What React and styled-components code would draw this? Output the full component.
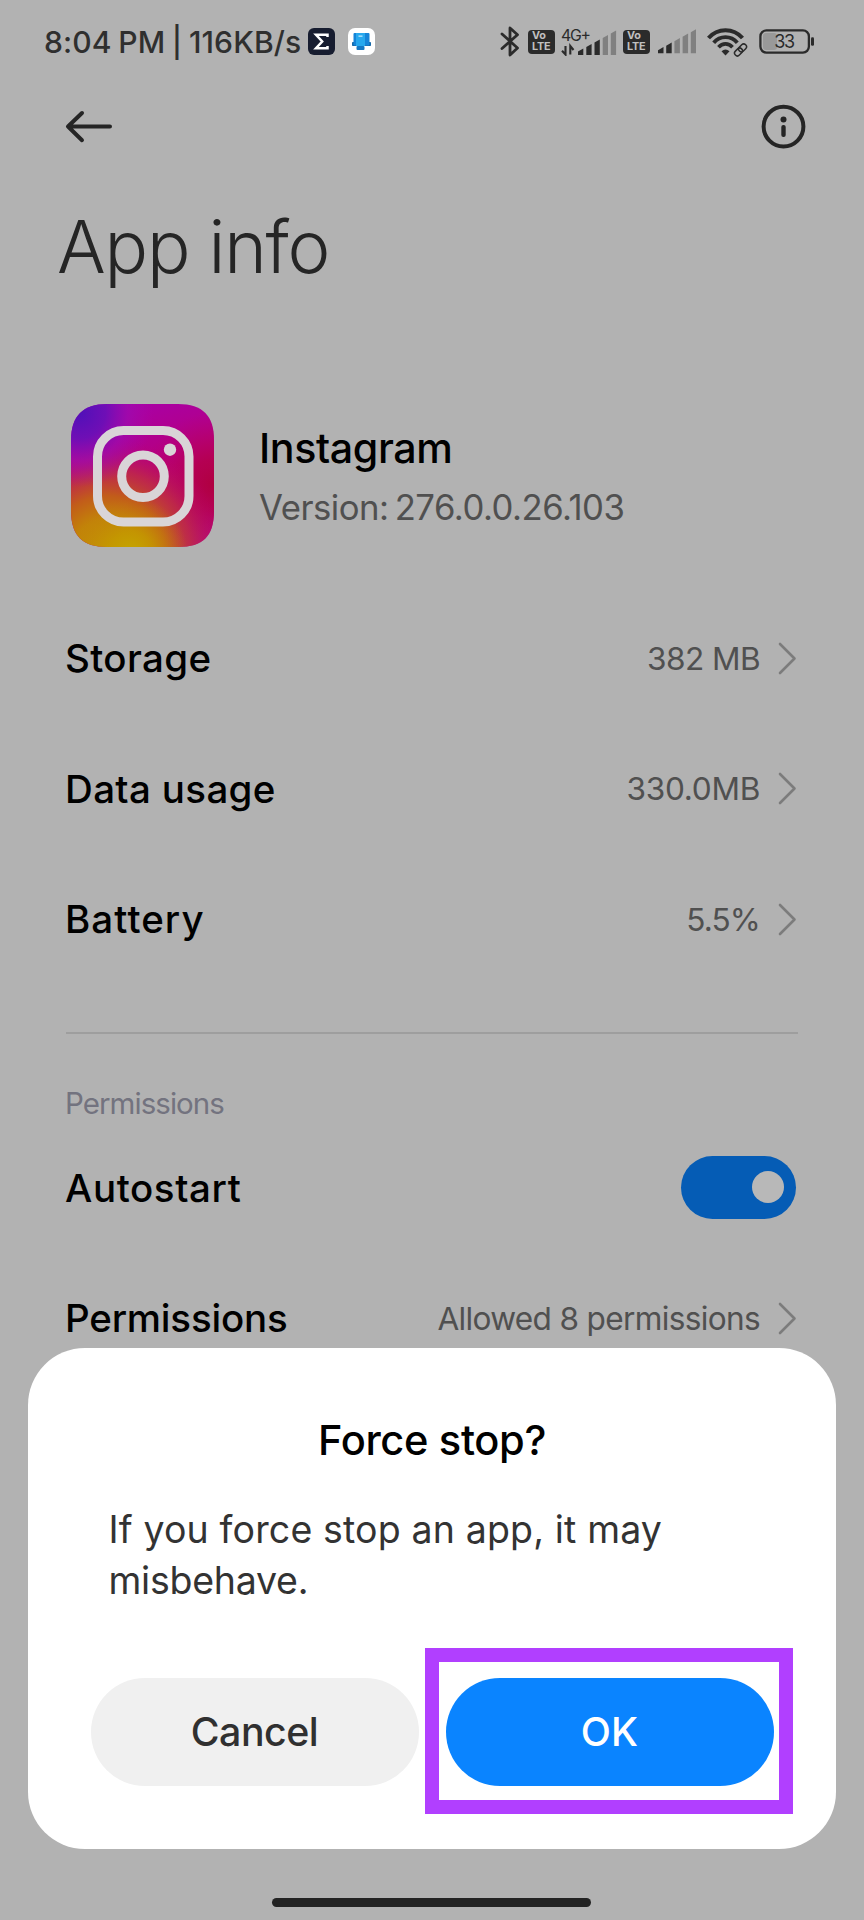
import React from "react";
import styled, { createGlobalStyle } from "styled-components";

const GlobalStyle = createGlobalStyle`
  * { box-sizing: border-box; }
  body { margin: 0; background: #b2b2b2; }
`;

const ink = "#252525";

const Screen = styled.div`
  position: relative;
  width: 864px;
  height: 1920px;
  overflow: hidden;
  background: #b2b2b2;
  color: #000;
  font-family: Inter, "Noto Sans", sans-serif;
  svg { display: block; flex: none; }
`;

const StatusBar = styled.header`
  display: flex;
  align-items: center;
  justify-content: space-between;
  height: 83px;
  padding: 0 49px 0 44px;
`;

const StatusGroup = styled.div`
  display: flex;
  align-items: center;
`;

const Clock = styled.span`
  width: 264px;
  font-size: 30.1px;
  line-height: 40px;
  font-weight: 450;
  letter-spacing: 0.12px;
  word-spacing: -1.6px;
  white-space: pre;
  color: #2f2f2f;
`;

const NotificationIcon = styled.svg`
  margin-right: ${(p) => p.$gap || 0}px;
`;

const StatusIcon = styled.svg`
  margin-left: ${(p) => p.$gap || 0}px;
`;

const VolteBadge = styled.div`
  display: flex;
  flex-direction: column;
  justify-content: center;
  width: 27px;
  height: 24px;
  margin-left: ${(p) => p.$gap}px;
  padding-left: 4px;
  border-radius: 4px;
  background: #2b2b2b;
  color: #c0c0c0;
  font-size: 10.8px;
  line-height: 10.8px;
  font-weight: 700;
  letter-spacing: -0.2px;
`;

const Toolbar = styled.nav`
  display: flex;
  align-items: center;
  justify-content: space-between;
  height: 87px;
  padding: 0 57.5px 0 65px;
`;

const PageTitle = styled.h1`
  margin: 0;
  padding-left: 57px;
  height: 153px;
  line-height: 154px;
  font-size: 72.4px;
  font-weight: 300;
  letter-spacing: -1.2px;
  color: ${ink};
`;

const AppHeader = styled.section`
  display: flex;
  align-items: center;
  gap: 45px;
  height: 143px;
  margin: 80.5px 0 46.5px 71px;
`;

const AppText = styled.div`
  padding-top: 5px;
`;

const AppName = styled.div`
  line-height: 58.5px;
  font-size: 41.2px;
  font-weight: 500;
  letter-spacing: -0.4px;
`;

const AppVersion = styled.div`
  line-height: 58.5px;
  font-size: 34.7px;
  letter-spacing: -0.5px;
  word-spacing: -3px;
  color: #505050;
`;

const Row = styled.div`
  display: flex;
  align-items: center;
  height: 130.5px;
  padding: 0 67px 0 65px;
`;

const RowLabel = styled.span`
  flex: 1;
  font-size: 38.5px;
  font-weight: 500;
  letter-spacing: ${(p) => p.$track}px;
  white-space: nowrap;
`;

const RowValue = styled.span`
  margin-right: 18px;
  font-size: 31.6px;
  letter-spacing: ${(p) => p.$track}px;
  white-space: nowrap;
  color: #505050;
`;

const Divider = styled.hr`
  height: 1.5px;
  margin: 47.5px 66px 0;
  border: 0;
  background: #9e9e9e;
`;

const SectionLabel = styled.h2`
  margin: 0;
  padding: 49px 0 0 65px;
  height: 89px;
  line-height: 40px;
  font-size: 29.5px;
  font-weight: 400;
  letter-spacing: -0.95px;
  color: #73737f;
`;

const Switch = styled.div`
  display: flex;
  align-items: center;
  justify-content: flex-end;
  width: 115px;
  height: 63px;
  margin: 0 1px 1px 0;
  padding-right: 12.5px;
  border-radius: 32px;
  background: #055cb5;
`;

const Knob = styled.div`
  width: 32px;
  height: 32px;
  border-radius: 50%;
  background: #b8b8b8;
`;

const Dialog = styled.section`
  position: absolute;
  left: 28px;
  top: 1348px;
  width: 808px;
  height: 501px;
  padding: 62px 62.5px 0;
  border-radius: 57px;
  background: #fff;
`;

const DialogTitle = styled.h2`
  margin: 0;
  line-height: 60px;
  text-align: center;
  font-size: 41.6px;
  font-weight: 500;
  letter-spacing: -0.35px;
`;

const DialogBody = styled.p`
  margin: 33.5px 0 0;
  padding-left: 18px;
  line-height: 51.5px;
  font-size: 37.5px;
  letter-spacing: 0.15px;
  color: #333;
  span { letter-spacing: -0.25px; }
`;

const Actions = styled.div`
  display: flex;
  gap: 27px;
  margin-top: 71px;
`;

const ActionButton = styled.button`
  flex: 1;
  height: 108px;
  padding: 0;
  border: 0;
  border-radius: 54px;
  background: ${(p) => (p.$primary ? "#0a84ff" : "#f0f0f0")};
  color: ${(p) => (p.$primary ? "#fff" : "#303030")};
  font-family: inherit;
  font-size: 39.3px;
  font-weight: 500;
  letter-spacing: ${(p) => (p.$primary ? 0.2 : -0.5)}px;
`;

const Highlight = styled.div`
  position: absolute;
  left: 397px;
  top: 300px;
  width: 368px;
  height: 166px;
  border: 14px solid #b13fff;
`;

const HomeIndicator = styled.div`
  position: absolute;
  left: 272px;
  bottom: 13px;
  width: 319px;
  height: 9px;
  border-radius: 4.5px;
  background: #232323;
`;

function Bars({ dark, gap }) {
  const tops = [18, 13.5, 9, 4.5, 0];
  return (
    <StatusIcon $gap={gap} width="38.5" height="25" viewBox="0 0 38.5 25">
      {tops.map((t, i) => (
        <path
          key={t}
          d={`M${i * 8.2} ${t + 3.2} L${i * 8.2 + 5.5} ${t} V24.3 H${i * 8.2} Z`}
          fill={i < dark ? "#2b2b2b" : "#808080"}
        />
      ))}
    </StatusIcon>
  );
}

function Bluetooth() {
  return (
    <StatusIcon width="20" height="31" viewBox="0 0 20 31" fill="none" stroke="#2b2b2b" strokeWidth="2.8" strokeLinejoin="round" strokeLinecap="round">
      <path d="M2 8 L17.5 22 L10 29 V2 L17.5 8.8 L2 22.5" />
    </StatusIcon>
  );
}

function MobileData() {
  return (
    <StatusIcon $gap={6} width="56" height="29" viewBox="0 0 56 29">
      <text x="0" y="13.8" fontSize="15.8" fontFamily="Inter, sans-serif" fontWeight="400" fill="#2b2b2b" textLength="30">4G+</text>
      <path d="M4.5 19 V27.5 L1 23.8 M9.3 27.5 V19 L12.5 23" fill="none" stroke="#2b2b2b" strokeWidth="2.1" />
      {[
        [17, 21.5],
        [25.3, 17],
        [33.5, 12.5],
        [41.7, 8],
        [49.8, 3.5],
      ].map(([x, y], i) => (
        <path key={x} d={`M${x} ${y + 3} L${x + 5.3} ${y} V28 H${x} Z`} fill={i < 3 ? "#2b2b2b" : "#808080"} />
      ))}
    </StatusIcon>
  );
}

function Wifi() {
  return (
    <StatusIcon $gap={11} width="41" height="30" viewBox="0 0 41 30" fill="none" stroke="#2b2b2b">
      <path d="M1.5 11 C10.5 0.5 26.5 0.5 35.5 11" strokeWidth="4" />
      <path d="M6.7 15.8 C13 8.3 24 8.3 30.3 15.8" strokeWidth="3.8" />
      <path d="M11.5 20.3 C15.5 15.7 21.5 15.7 25.5 20.3" strokeWidth="3.6" />
      <path d="M14.5 24.3 Q18.5 20.8 22.5 24.3 L18.5 28.4 Z" fill="#2b2b2b" stroke="none" />
      <g transform="rotate(-45 33.5 23)">
        <rect x="25.5" y="18.5" width="16" height="9" rx="4.5" fill="#b2b2b2" stroke="none" />
        <rect x="26.3" y="20.2" width="8.8" height="5.6" rx="2.8" strokeWidth="1.5" />
        <rect x="32" y="20.2" width="8.8" height="5.6" rx="2.8" strokeWidth="1.5" />
      </g>
    </StatusIcon>
  );
}

function Battery() {
  return (
    <StatusIcon $gap={11} width="56" height="25" viewBox="0 0 56 25">
      <rect x="4" y="4" width="14" height="17" rx="3" fill="#999" />
      <rect x="1.4" y="1.4" width="48.5" height="22.2" rx="6" fill="none" stroke="#2b2b2b" strokeWidth="2.3" />
      <rect x="52" y="8.3" width="3" height="8.5" rx="1.3" fill="#2b2b2b" />
      <text x="25.7" y="19" textAnchor="middle" fontSize="18" fontFamily="Inter, sans-serif" fontWeight="400" fill="#2b2b2b" textLength="21">33</text>
    </StatusIcon>
  );
}

function Volte({ gap }) {
  return (
    <VolteBadge $gap={gap}>
      <span>Vo</span>
      <span>LTE</span>
    </VolteBadge>
  );
}

function InstagramLogo() {
  return (
    <svg width="143" height="143" viewBox="0 0 143 143">
      <defs>
        <linearGradient id="base" x1="0.35" y1="0" x2="0.65" y2="1">
          <stop offset="0" stopColor="#a800a8" />
          <stop offset="0.5" stopColor="#b80078" />
          <stop offset="1" stopColor="#b4107c" />
        </linearGradient>
        <radialGradient id="red" cx="1" cy="0.56" r="0.5">
          <stop offset="0" stopColor="#b00040" />
          <stop offset="0.35" stopColor="#b4004c" stopOpacity="0.85" />
          <stop offset="1" stopColor="#b8006c" stopOpacity="0" />
        </radialGradient>
        <radialGradient id="orange" cx="0.25" cy="1.05" r="0.82">
          <stop offset="0" stopColor="#c29a00" />
          <stop offset="0.3" stopColor="#c28408" />
          <stop offset="0.5" stopColor="#c25c1a" />
          <stop offset="0.72" stopColor="#c03040" stopOpacity="0.75" />
          <stop offset="1" stopColor="#b80070" stopOpacity="0" />
        </radialGradient>
        <radialGradient id="yellow" cx="0.42" cy="1.05" r="0.4">
          <stop offset="0" stopColor="#c4a800" />
          <stop offset="0.4" stopColor="#c49800" stopOpacity="0.8" />
          <stop offset="1" stopColor="#c27810" stopOpacity="0" />
        </radialGradient>
        <radialGradient id="violet" cx="0.06" cy="0.06" r="0.52">
          <stop offset="0" stopColor="#5010b8" />
          <stop offset="0.35" stopColor="#6810b8" stopOpacity="0.9" />
          <stop offset="0.65" stopColor="#9c0cb0" stopOpacity="0.7" />
          <stop offset="1" stopColor="#a808a8" stopOpacity="0" />
        </radialGradient>
        <clipPath id="tile">
          <path d="M36 0 H107 C132 0 143 12 143 36 V107 C143 132 132 143 107 143 H36 C12 143 0 132 0 107 V36 C0 12 12 0 36 0 Z" />
        </clipPath>
      </defs>
      <g clipPath="url(#tile)">
        {["base", "red", "orange", "yellow", "violet"].map((id) => (
          <rect key={id} width="143" height="143" fill={`url(#${id})`} />
        ))}
      </g>
      <g fill="none" stroke="#d9d5d7" strokeWidth="9">
        <rect x="26.5" y="26.5" width="91.5" height="91.5" rx="26" />
        <circle cx="72" cy="72.3" r="21.3" />
      </g>
      <circle cx="99" cy="45.7" r="6.2" fill="#d9d5d7" />
    </svg>
  );
}

function Chevron() {
  return (
    <svg width="19" height="33" viewBox="0 0 19 33" fill="none" stroke="#7c7c7c" strokeWidth="2.6" strokeLinecap="round" strokeLinejoin="round">
      <path d="M2 2 L16.5 16.5 L2 31" />
    </svg>
  );
}

function LinkRow({ label, track, value, valueTrack }) {
  return (
    <Row>
      <RowLabel $track={track}>{label}</RowLabel>
      <RowValue $track={valueTrack}>{value}</RowValue>
      <Chevron />
    </Row>
  );
}

export default function App() {
  return (
    <Screen>
      <GlobalStyle />
      <StatusBar>
        <StatusGroup>
          <Clock>8:04 PM | 116KB/s</Clock>
          <NotificationIcon $gap={13} width="27" height="27" viewBox="0 0 27 27">
            <rect width="27" height="27" rx="6" fill="#171d30" />
            <path d="M19.5 9 V6.8 H8 L14.2 13.5 L8 20.2 H19.5 V18" fill="none" stroke="#fff" strokeWidth="2.5" />
          </NotificationIcon>
          <NotificationIcon width="27" height="27" viewBox="0 0 27 27">
            <rect width="27" height="27" rx="7" fill="#fff" />
            <rect x="4" y="14" width="19" height="4" rx="0.8" fill="#1668a8" />
            <rect x="5.5" y="5" width="16" height="12.5" rx="1" fill="#1584d8" />
            <rect x="8" y="5" width="9" height="13" fill="#27a8ee" />
            <rect x="8.5" y="18" width="8" height="4" rx="1" fill="#1478c4" />
            <rect x="10.5" y="7.5" width="4" height="1.3" fill="#bfe8ff" />
          </NotificationIcon>
        </StatusGroup>
        <StatusGroup>
          <Bluetooth />
          <Volte gap={8} />
          <MobileData />
          <Volte gap={6} />
          <Bars dark={2} gap={7.5} />
          <Wifi />
          <Battery />
        </StatusGroup>
      </StatusBar>

      <Toolbar>
        <svg width="48" height="34" viewBox="0 0 48 34" fill="none" stroke={ink} strokeWidth="4" strokeLinecap="round" strokeLinejoin="round">
          <path d="M17 3 L3 16.5 L17 30.2 M3 16.5 H45" />
        </svg>
        <svg width="46" height="46" viewBox="0 0 46 46">
          <circle cx="22.5" cy="22.6" r="19.9" fill="none" stroke={ink} strokeWidth="4" />
          <circle cx="22.5" cy="15.4" r="3" fill={ink} />
          <rect x="20.3" y="21.1" width="4.4" height="12" rx="2" fill={ink} />
        </svg>
      </Toolbar>

      <PageTitle>App info</PageTitle>

      <AppHeader>
        <InstagramLogo />
        <AppText>
          <AppName>Instagram</AppName>
          <AppVersion>Version: 276.0.0.26.103</AppVersion>
        </AppText>
      </AppHeader>

      <LinkRow label="Storage" track={0.37} value="382 MB" valueTrack={-0.59} />
      <LinkRow label="Data usage" track={0.35} value="330.0MB" valueTrack={-0.3} />
      <LinkRow label="Battery" track={1.07} value="5.5%" valueTrack={-0.9} />

      <Divider />
      <SectionLabel>Permissions</SectionLabel>

      <Row>
        <RowLabel $track={0.6}>Autostart</RowLabel>
        <Switch>
          <Knob />
        </Switch>
      </Row>
      <LinkRow label="Permissions" track={-0.2} value="Allowed 8 permissions" valueTrack={-0.67} />

      <Dialog>
        <DialogTitle>Force stop?</DialogTitle>
        <DialogBody>
          If you force stop an app, it may
          <br />
          <span>misbehave.</span>
        </DialogBody>
        <Actions>
          <ActionButton>Cancel</ActionButton>
          <ActionButton $primary>OK</ActionButton>
        </Actions>
        <Highlight />
      </Dialog>
      <HomeIndicator />
    </Screen>
  );
}
